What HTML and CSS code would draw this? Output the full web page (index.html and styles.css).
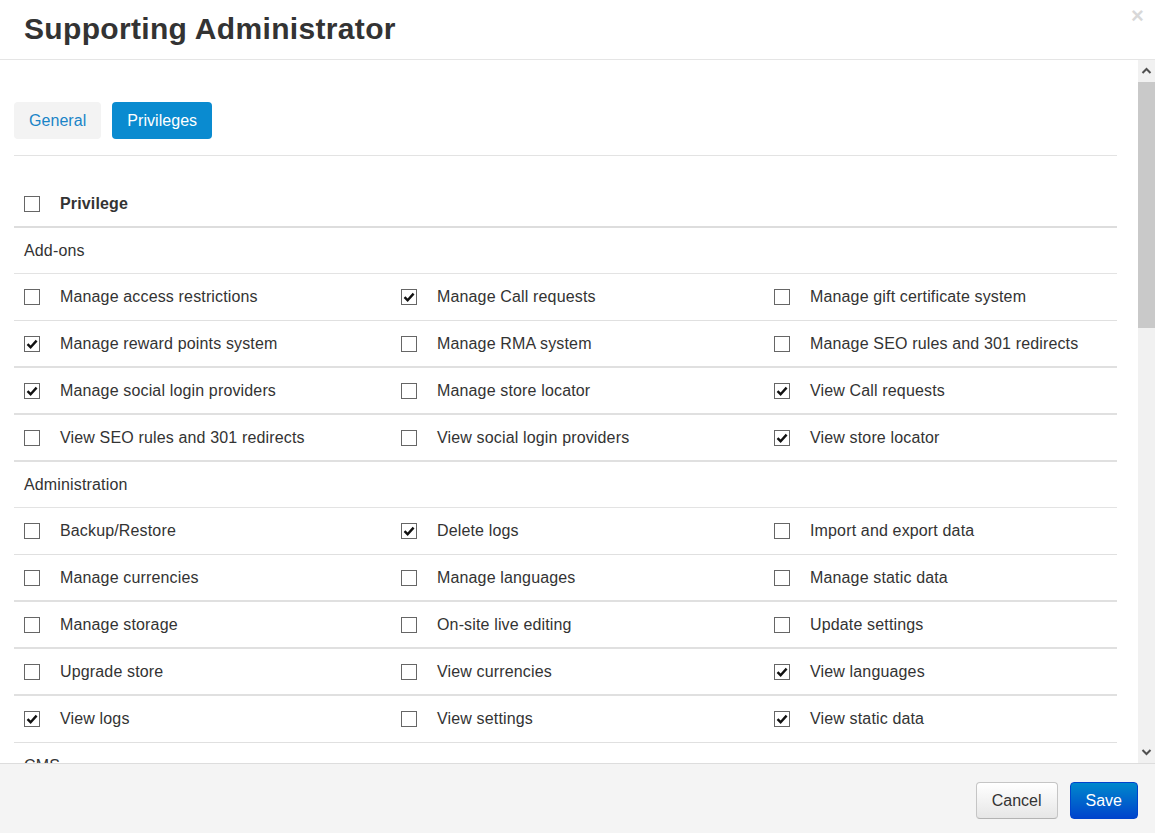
FILE: index.html
```html
<!DOCTYPE html>
<html>
<head>
<meta charset="utf-8">
<link rel="stylesheet" href="styles.css">
</head>
<body>
<div class="modal">
  <header class="modal-header">
    <h1 class="title">Supporting Administrator</h1>
    <span class="close">×</span>
  </header>
  <div class="modal-body">
    <div class="content">
      <div class="tabs">
        <span class="tab">General</span>
        <span class="tab active">Privileges</span>
      </div>
      <div class="divider"></div>
      <div class="table">
        <div class="row head">
          <div class="cell"><span class="cb"></span><span class="label bold">Privilege</span></div>
        </div>
        <div class="row section">Add-ons</div>
        <div class="row item">
          <div class="cell"><span class="cb"></span><span class="label">Manage access restrictions</span></div>
          <div class="cell"><span class="cb on"><svg viewBox="0 0 14 14"><path d="M2.5 7.2 5.6 10.2 11.6 3.6" /></svg></span><span class="label">Manage Call requests</span></div>
          <div class="cell"><span class="cb"></span><span class="label">Manage gift certificate system</span></div>
        </div>
        <div class="row item thick">
          <div class="cell"><span class="cb on"><svg viewBox="0 0 14 14"><path d="M2.5 7.2 5.6 10.2 11.6 3.6" /></svg></span><span class="label">Manage reward points system</span></div>
          <div class="cell"><span class="cb"></span><span class="label">Manage RMA system</span></div>
          <div class="cell"><span class="cb"></span><span class="label">Manage SEO rules and 301 redirects</span></div>
        </div>
        <div class="row item thick">
          <div class="cell"><span class="cb on"><svg viewBox="0 0 14 14"><path d="M2.5 7.2 5.6 10.2 11.6 3.6" /></svg></span><span class="label">Manage social login providers</span></div>
          <div class="cell"><span class="cb"></span><span class="label">Manage store locator</span></div>
          <div class="cell"><span class="cb on"><svg viewBox="0 0 14 14"><path d="M2.5 7.2 5.6 10.2 11.6 3.6" /></svg></span><span class="label">View Call requests</span></div>
        </div>
        <div class="row item thick">
          <div class="cell"><span class="cb"></span><span class="label">View SEO rules and 301 redirects</span></div>
          <div class="cell"><span class="cb"></span><span class="label">View social login providers</span></div>
          <div class="cell"><span class="cb on"><svg viewBox="0 0 14 14"><path d="M2.5 7.2 5.6 10.2 11.6 3.6" /></svg></span><span class="label">View store locator</span></div>
        </div>
        <div class="row section">Administration</div>
        <div class="row item">
          <div class="cell"><span class="cb"></span><span class="label">Backup/Restore</span></div>
          <div class="cell"><span class="cb on"><svg viewBox="0 0 14 14"><path d="M2.5 7.2 5.6 10.2 11.6 3.6" /></svg></span><span class="label">Delete logs</span></div>
          <div class="cell"><span class="cb"></span><span class="label">Import and export data</span></div>
        </div>
        <div class="row item thick">
          <div class="cell"><span class="cb"></span><span class="label">Manage currencies</span></div>
          <div class="cell"><span class="cb"></span><span class="label">Manage languages</span></div>
          <div class="cell"><span class="cb"></span><span class="label">Manage static data</span></div>
        </div>
        <div class="row item thick">
          <div class="cell"><span class="cb"></span><span class="label">Manage storage</span></div>
          <div class="cell"><span class="cb"></span><span class="label">On-site live editing</span></div>
          <div class="cell"><span class="cb"></span><span class="label">Update settings</span></div>
        </div>
        <div class="row item thick">
          <div class="cell"><span class="cb"></span><span class="label">Upgrade store</span></div>
          <div class="cell"><span class="cb"></span><span class="label">View currencies</span></div>
          <div class="cell"><span class="cb on"><svg viewBox="0 0 14 14"><path d="M2.5 7.2 5.6 10.2 11.6 3.6" /></svg></span><span class="label">View languages</span></div>
        </div>
        <div class="row item">
          <div class="cell"><span class="cb on"><svg viewBox="0 0 14 14"><path d="M2.5 7.2 5.6 10.2 11.6 3.6" /></svg></span><span class="label">View logs</span></div>
          <div class="cell"><span class="cb"></span><span class="label">View settings</span></div>
          <div class="cell"><span class="cb on"><svg viewBox="0 0 14 14"><path d="M2.5 7.2 5.6 10.2 11.6 3.6" /></svg></span><span class="label">View static data</span></div>
        </div>
        <div class="row section">CMS</div>
      </div>
    </div>
    <div class="scrollbar">
      <div class="sb-btn"><svg viewBox="0 0 17 22"><path d="M4.5 13 8.5 9 12.5 13" /></svg></div>
      <div class="sb-track"><div class="sb-thumb"></div></div>
      <div class="sb-btn"><svg viewBox="0 0 17 22"><path d="M4.5 9 8.5 13 12.5 9" /></svg></div>
    </div>
  </div>
  <footer class="modal-footer">
    <button class="btn">Cancel</button>
    <button class="btn primary">Save</button>
  </footer>
</div>
</body>
</html>
```

FILE: styles.css
```css
* { box-sizing: border-box; }
html, body { margin: 0; padding: 0; }
body {
  font-family: "Liberation Sans", Arial, sans-serif;
  font-size: 16px;
  letter-spacing: 0.15px;
  color: #333;
  background: #fff;
  width: 1155px;
  height: 833px;
  overflow: hidden;
}
.modal {
  display: flex;
  flex-direction: column;
  height: 833px;
}
.modal-header {
  position: relative;
  height: 60px;
  border-bottom: 1px solid #e5e5e5;
  display: flex;
  align-items: center;
  padding: 0 24px 2px;
  flex: none;
}
.title {
  margin: 0;
  font-size: 30px;
  font-weight: bold;
  color: #333;
  line-height: 36px;
  letter-spacing: 0.33px;
}
.close {
  position: absolute;
  top: 3px;
  right: 11px;
  font-size: 22px;
  font-weight: bold;
  color: #000;
  opacity: 0.15;
  line-height: 26px;
}
.modal-body {
  flex: 1;
  display: flex;
  min-height: 0;
  overflow: hidden;
}
.content {
  flex: 1;
  padding: 42px 21px 0 14px;
  overflow: hidden;
}
.tabs {
  display: flex;
  gap: 11px;
}
.tab {
  height: 37px;
  line-height: 37px;
  padding: 0 15px;
  border-radius: 4px;
  background: #f3f3f3;
  color: #1a84c7;
  letter-spacing: 0.05px;
}
.tab.active {
  background: #0a8bd0;
  color: #fff;
}
.divider {
  margin-top: 16px;
  border-top: 1px solid #e3e3e3;
}
.table {
  margin-top: 24px;
}
.row {
  display: grid;
  grid-template-columns: 377px 373px 1fr;
  align-items: center;
}
.row.head {
  height: 48px;
  padding-top: 1px;
  border-bottom: 2px solid #ddd;
}
.row.section {
  display: flex;
  height: 46px;
  padding-left: 10px;
  border-bottom: 1px solid #e3e3e3;
}
.row.item {
  height: 47px;
  border-bottom: 1px solid #e0e0e0;
}
.row.item.thick {
  border-bottom: 2px solid #e0e0e0;
}
.cell {
  display: flex;
  align-items: center;
  padding-left: 10px;
}
.cb {
  width: 16px;
  height: 16px;
  border: 1px solid #666;
  background: #fff;
  flex: none;
  margin-right: 20px;
  display: flex;
  align-items: center;
  justify-content: center;
}
.cb svg {
  width: 14px;
  height: 14px;
}
.cb svg path {
  fill: none;
  stroke: #111;
  stroke-width: 2.4;
}
.label {
  white-space: nowrap;
}
.bold { font-weight: bold; }
.scrollbar {
  width: 17px;
  flex: none;
  display: flex;
  flex-direction: column;
  background: #f1f1f1;
}
.sb-btn {
  height: 22px;
  flex: none;
}
.sb-btn svg {
  width: 17px;
  height: 22px;
  display: block;
}
.sb-btn svg path {
  fill: none;
  stroke: #505050;
  stroke-width: 2;
}
.sb-track {
  flex: 1;
}
.sb-thumb {
  height: 246px;
  background: #c9c9c9;
}
.modal-footer {
  flex: none;
  height: 70px;
  border-top: 1px solid #ddd;
  background: #f4f4f4;
  display: flex;
  justify-content: flex-end;
  align-items: flex-start;
  gap: 12px;
  padding: 18px 17px 0 0;
}
.btn {
  font-family: "Liberation Sans", Arial, sans-serif;
  font-size: 16px;
  height: 37px;
  padding: 0 15px;
  border-radius: 4px;
  border: 1px solid #c5c5c5;
  border-bottom-color: #b3b3b3;
  background: linear-gradient(#ffffff, #e6e6e6);
  color: #333;
}
.btn.primary {
  background: linear-gradient(#0088cc, #0044cc);
  border-color: #0044cc;
  color: #fff;
}
```
